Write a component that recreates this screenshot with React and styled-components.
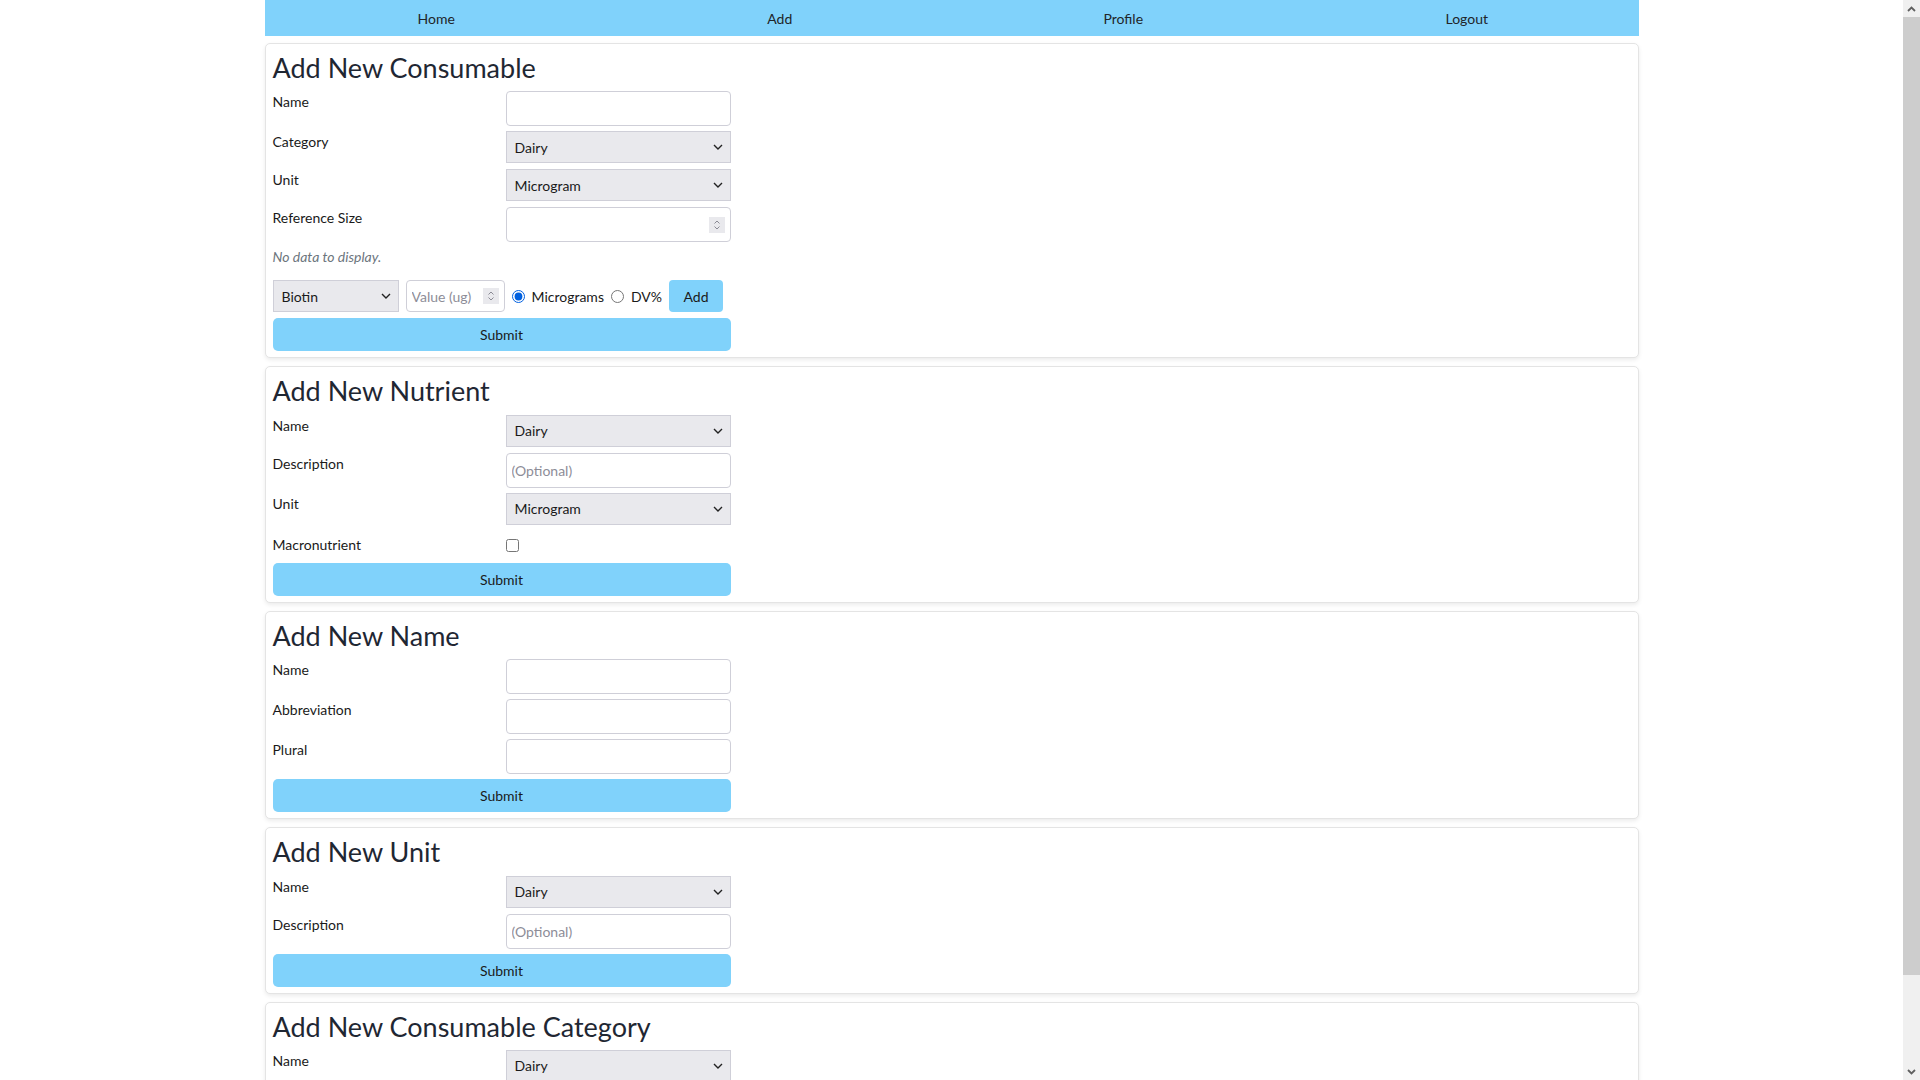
import React, { useState } from "react";
import styled, { createGlobalStyle } from "styled-components";

const GlobalStyle = createGlobalStyle`
  html, body {
    margin: 0;
    padding: 0;
    background: #ffffff;
    overflow: hidden;
  }
  body {
    font-family: Lato, "Open Sans", "Liberation Sans", sans-serif;
    font-size: 14px;
    color: #212529;
  }
  * {
    box-sizing: border-box;
  }
`;

const chevron = `url("data:image/svg+xml;utf8,<svg xmlns='http://www.w3.org/2000/svg' width='10' height='6' viewBox='0 0 10 6'><path d='M1 1l4 4 4-4' fill='none' stroke='%23222' stroke-width='1.4'/></svg>")`;

const Shell = styled.div`
  display: flex;
  height: 100vh;
`;

const Viewport = styled.div`
  flex: 1;
  height: 100%;
  overflow-y: auto;
  scrollbar-width: none;
  &::-webkit-scrollbar {
    display: none;
  }
`;

const ScrollRail = styled.div`
  width: 17px;
  display: flex;
  flex-direction: column;
  background: #f0f0f0;
`;

const RailButton = styled.div`
  height: 17px;
  display: flex;
  align-items: center;
  justify-content: center;
  flex-shrink: 0;
`;

const RailThumb = styled.div`
  height: 958px;
  background: #cdcdcd;
`;

const RailSpace = styled.div`
  flex: 1;
`;

const Page = styled.div`
  width: 1374px;
  margin: 0 auto;
  padding-bottom: 60px;
`;

const NavBar = styled.nav`
  display: flex;
  height: 36px;
  background: #80d2fb;
`;

const NavItem = styled.a`
  flex: 1;
  display: flex;
  align-items: center;
  justify-content: center;
  color: #212529;
  text-decoration: none;
  font-size: 14px;
  cursor: pointer;
`;

const Stack = styled.div`
  display: flex;
  flex-direction: column;
  gap: 8px;
  margin-top: 7px;
`;

const Card = styled.section`
  background: #fff;
  border: 1px solid #e4e4e4;
  border-radius: 5px;
  box-shadow: 0 2px 4px rgba(0, 0, 0, 0.08);
  padding: 8px 7px 6px;
`;

const Heading = styled.h3`
  margin: 0 0 7px;
  font-size: 27px;
  font-weight: 400;
  line-height: 1.2;
  color: #1f2733;
`;

const Form = styled.form`
  width: 458px;
  display: flex;
  flex-direction: column;
  gap: 5px;
`;

const Row = styled.div`
  display: grid;
  grid-template-columns: 233px 1fr;
  align-items: start;
  min-height: ${({ $tight }) => ($tight ? "27px" : "33px")};
  padding-top: ${({ $tight }) => ($tight ? "3px" : "0")};
`;

const Label = styled.label`
  line-height: 21px;
  font-size: 14px;
  color: #1a1a1a;
`;

const TextInput = styled.input`
  width: 100%;
  height: 35px;
  border: 1px solid #cfcfd8;
  border-radius: 4px;
  padding: 0 5px;
  font-family: inherit;
  font-size: 14px;
  color: #212529;
  background: #fff;
  outline: none;
  &::placeholder {
    color: #8d8d98;
  }
`;

const NumberShell = styled.div`
  display: flex;
  align-items: center;
  width: ${({ $width }) => $width || "100%"};
  height: ${({ $height }) => $height || "35px"};
  border: 1px solid #cfcfd8;
  border-radius: 4px;
  padding: 0 5px;
  background: #fff;
`;

const BareInput = styled.input`
  flex: 1;
  min-width: 0;
  border: none;
  outline: none;
  padding: 0;
  font-family: inherit;
  font-size: 14px;
  color: #212529;
  background: transparent;
  -moz-appearance: textfield;
  &::-webkit-outer-spin-button,
  &::-webkit-inner-spin-button {
    -webkit-appearance: none;
    margin: 0;
  }
  &::placeholder {
    color: #8d8d98;
  }
`;

const Spinner = styled.span`
  width: 16px;
  height: 16px;
  background: #e9e9ed;
  display: flex;
  align-items: center;
  justify-content: center;
  flex-shrink: 0;
`;

const Select = styled.select`
  width: ${({ $width }) => $width || "100%"};
  height: 32px;
  border: 1px solid #cfcfd8;
  border-radius: 0;
  padding: 0 20px 0 8px;
  font-family: inherit;
  font-size: 14px;
  color: #1a1a1a;
  background-color: #e9e9ed;
  background-image: ${chevron};
  background-repeat: no-repeat;
  background-position: right 7px center;
  appearance: none;
  -webkit-appearance: none;
  outline: none;
`;

const Empty = styled.p`
  margin: -1px 0 8px;
  font-style: italic;
  color: #6c757d;
  line-height: 21px;
`;

const InlineRow = styled.div`
  display: flex;
  align-items: center;
  gap: 7px;
  height: 32px;
  margin-bottom: 1px;
`;

const RadioOption = styled.label`
  display: flex;
  align-items: center;
  gap: 7px;
  font-size: 14px;
  color: #1a1a1a;
  cursor: pointer;
`;

const Radio = styled.input`
  margin: 0;
  width: 13px;
  height: 13px;
  accent-color: #0060df;
`;

const Checkbox = styled.input`
  margin: 5px 0 0;
  width: 13px;
  height: 13px;
`;

const AddButton = styled.button`
  height: 32px;
  width: 54px;
  border: none;
  border-radius: 4px;
  background: #80d2fb;
  font-family: inherit;
  font-size: 14px;
  color: #1a1a1a;
  cursor: pointer;
`;

const SubmitButton = styled.button`
  width: 100%;
  height: 33px;
  border: none;
  border-radius: 5px;
  background: #80d2fb;
  font-family: inherit;
  font-size: 14px;
  color: #1a1a1a;
  cursor: pointer;
`;

const SpinIcon = () => (
  <svg width="8" height="12" viewBox="0 0 8 12">
    <path d="M1.5 4.5L4 2l2.5 2.5M1.5 7.5L4 10l2.5-2.5" fill="none" stroke="#8a8a94" strokeWidth="1" />
  </svg>
);

const RailArrow = ({ down }) => (
  <svg width="9" height="6" viewBox="0 0 9 6">
    <path
      d={down ? "M1 1l3.5 3.5L8 1" : "M1 5l3.5-3.5L8 5"}
      fill="none"
      stroke="#606060"
      strokeWidth="1.8"
    />
  </svg>
);

const NumberField = ({ placeholder, width, height }) => (
  <NumberShell $width={width} $height={height}>
    <BareInput type="number" placeholder={placeholder} />
    <Spinner>
      <SpinIcon />
    </Spinner>
  </NumberShell>
);

const CategoryOptions = () => (
  <>
    <option>Dairy</option>
    <option>Meat</option>
    <option>Produce</option>
  </>
);

const UnitOptions = () => (
  <>
    <option>Microgram</option>
    <option>Milligram</option>
    <option>Gram</option>
  </>
);

const prevent = (e) => e.preventDefault();

const App = () => {
  const [mode, setMode] = useState("ug");

  return (
    <>
      <GlobalStyle />
      <Shell>
        <Viewport>
          <Page>
            <NavBar>
              <NavItem>Home</NavItem>
              <NavItem>Add</NavItem>
              <NavItem>Profile</NavItem>
              <NavItem>Logout</NavItem>
            </NavBar>

            <Stack>
              <Card>
                <Heading>Add New Consumable</Heading>
                <Form onSubmit={prevent}>
                  <Row>
                    <Label>Name</Label>
                    <TextInput type="text" />
                  </Row>
                  <Row>
                    <Label>Category</Label>
                    <Select>
                      <CategoryOptions />
                    </Select>
                  </Row>
                  <Row>
                    <Label>Unit</Label>
                    <Select>
                      <UnitOptions />
                    </Select>
                  </Row>
                  <Row>
                    <Label>Reference Size</Label>
                    <NumberField />
                  </Row>
                  <Empty>No data to display.</Empty>
                  <InlineRow>
                    <Select $width="126px">
                      <option>Biotin</option>
                      <option>Calcium</option>
                      <option>Iron</option>
                    </Select>
                    <NumberField placeholder="Value (ug)" width="99px" height="32px" />
                    <RadioOption>
                      <Radio
                        type="radio"
                        name="valueMode"
                        checked={mode === "ug"}
                        onChange={() => setMode("ug")}
                      />
                      Micrograms
                    </RadioOption>
                    <RadioOption>
                      <Radio
                        type="radio"
                        name="valueMode"
                        checked={mode === "dv"}
                        onChange={() => setMode("dv")}
                      />
                      DV%
                    </RadioOption>
                    <AddButton type="button">Add</AddButton>
                  </InlineRow>
                  <SubmitButton type="submit">Submit</SubmitButton>
                </Form>
              </Card>

              <Card>
                <Heading>Add New Nutrient</Heading>
                <Form onSubmit={prevent}>
                  <Row>
                    <Label>Name</Label>
                    <Select>
                      <CategoryOptions />
                    </Select>
                  </Row>
                  <Row>
                    <Label>Description</Label>
                    <TextInput type="text" placeholder="(Optional)" />
                  </Row>
                  <Row>
                    <Label>Unit</Label>
                    <Select>
                      <UnitOptions />
                    </Select>
                  </Row>
                  <Row $tight>
                    <Label>Macronutrient</Label>
                    <Checkbox type="checkbox" />
                  </Row>
                  <SubmitButton type="submit">Submit</SubmitButton>
                </Form>
              </Card>

              <Card>
                <Heading>Add New Name</Heading>
                <Form onSubmit={prevent}>
                  <Row>
                    <Label>Name</Label>
                    <TextInput type="text" />
                  </Row>
                  <Row>
                    <Label>Abbreviation</Label>
                    <TextInput type="text" />
                  </Row>
                  <Row>
                    <Label>Plural</Label>
                    <TextInput type="text" />
                  </Row>
                  <SubmitButton type="submit">Submit</SubmitButton>
                </Form>
              </Card>

              <Card>
                <Heading>Add New Unit</Heading>
                <Form onSubmit={prevent}>
                  <Row>
                    <Label>Name</Label>
                    <Select>
                      <CategoryOptions />
                    </Select>
                  </Row>
                  <Row>
                    <Label>Description</Label>
                    <TextInput type="text" placeholder="(Optional)" />
                  </Row>
                  <SubmitButton type="submit">Submit</SubmitButton>
                </Form>
              </Card>

              <Card>
                <Heading>Add New Consumable Category</Heading>
                <Form onSubmit={prevent}>
                  <Row>
                    <Label>Name</Label>
                    <Select>
                      <CategoryOptions />
                    </Select>
                  </Row>
                  <SubmitButton type="submit">Submit</SubmitButton>
                </Form>
              </Card>
            </Stack>
          </Page>
        </Viewport>

        <ScrollRail>
          <RailButton>
            <RailArrow />
          </RailButton>
          <RailThumb />
          <RailSpace />
          <RailButton>
            <RailArrow down />
          </RailButton>
        </ScrollRail>
      </Shell>
    </>
  );
};

export default App;
